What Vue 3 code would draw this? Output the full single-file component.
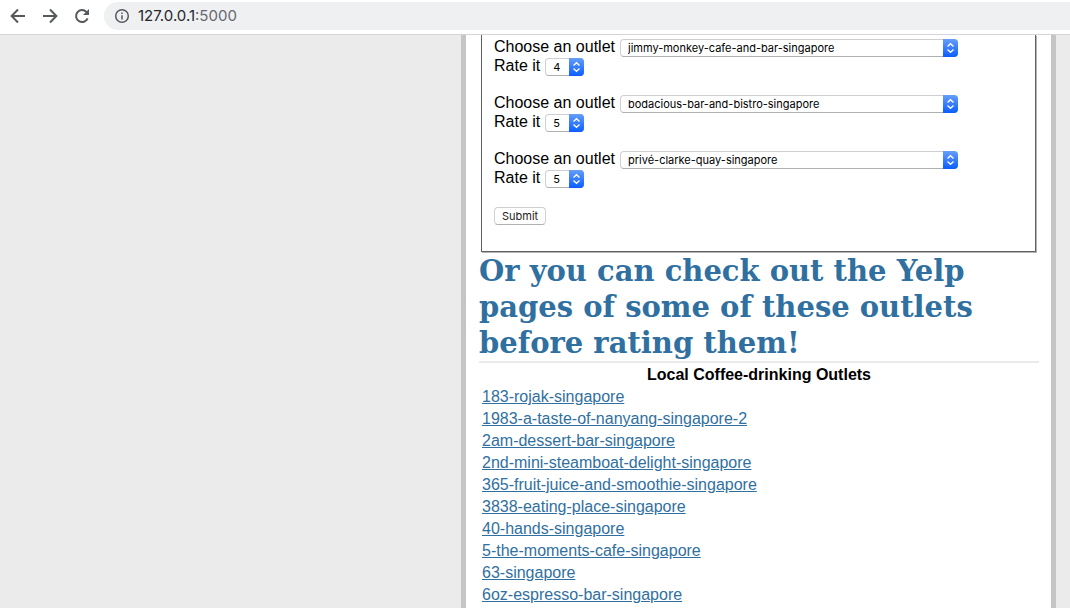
<script setup>
import { ref } from 'vue'

const ratings = ref([
  { outlet: 'jimmy-monkey-cafe-and-bar-singapore', score: 4 },
  { outlet: 'bodacious-bar-and-bistro-singapore', score: 5 },
  { outlet: 'privé-clarke-quay-singapore', score: 5 },
])
const choices = ratings.value.map((r) => r.outlet)

const outlets = [
  '183-rojak-singapore',
  '1983-a-taste-of-nanyang-singapore-2',
  '2am-dessert-bar-singapore',
  '2nd-mini-steamboat-delight-singapore',
  '365-fruit-juice-and-smoothie-singapore',
  '3838-eating-place-singapore',
  '40-hands-singapore',
  '5-the-moments-cafe-singapore',
  '63-singapore',
  '6oz-espresso-bar-singapore',
]
</script>

<template>
  <div class="browser">
    <header class="toolbar">
      <button class="nav" type="button" aria-label="Back">
        <svg viewBox="0 0 16 16"><path d="M15 8H2M8 1.5L1.6 8L8 14.5" /></svg>
      </button>
      <button class="nav" type="button" aria-label="Forward">
        <svg viewBox="0 0 16 16"><path d="M1 8H14M8 1.5L14.4 8L8 14.5" /></svg>
      </button>
      <button class="nav" type="button" aria-label="Reload">
        <svg viewBox="0 0 16 16">
          <path d="M13.6 10.3A6 6 0 1 1 12.4 3.9L13.4 5" />
          <path class="solid" d="M15 1V7H9Z" />
        </svg>
      </button>
      <div class="address">
        <svg class="info" viewBox="0 0 16 16">
          <circle cx="8" cy="8" r="6.3" />
          <path d="M8 7.2V11.6M8 4.4V6" />
        </svg>
        <span class="url">127.0.0.1<span class="port">:5000</span></span>
      </div>
    </header>

    <div class="viewport">
      <main class="page">
        <form class="panel" @submit.prevent>
          <div v-for="(r, i) in ratings" :key="i" class="group">
            <div class="line">
              <label :for="'outlet' + i">Choose an outlet</label>
              <span class="picker wide">
                <select :id="'outlet' + i" v-model="r.outlet">
                  <option v-for="c in choices" :key="c">{{ c }}</option>
                </select>
                <svg class="arrows" viewBox="0 0 15 18"><path d="M4.5 7.5L7.5 4.7L10.5 7.5M4.5 10.5L7.5 13.3L10.5 10.5" /></svg>
              </span>
            </div>
            <div class="line">
              <label :for="'score' + i">Rate it</label>
              <span class="picker small">
                <select :id="'score' + i" v-model="r.score">
                  <option v-for="n in 5" :key="n" :value="n">{{ n }}</option>
                </select>
                <svg class="arrows" viewBox="0 0 15 18"><path d="M4.5 7.5L7.5 4.7L10.5 7.5M4.5 10.5L7.5 13.3L10.5 10.5" /></svg>
              </span>
            </div>
          </div>
          <button class="submit" type="submit">Submit</button>
        </form>

        <h1>Or you can check out the Yelp pages of some of these outlets before rating them!</h1>

        <table>
          <thead>
            <tr><th>Local Coffee-drinking Outlets</th></tr>
          </thead>
          <tbody>
            <tr v-for="o in outlets" :key="o">
              <td><a href="#">{{ o }}</a></td>
            </tr>
          </tbody>
        </table>
      </main>
    </div>
  </div>
</template>

<style>
body {
  margin: 0;
  overflow: hidden;
}
</style>

<style scoped>
.browser {
  height: 100vh;
  display: flex;
  flex-direction: column;
  overflow: hidden;
  background: #ebebeb;
  font: 16px/18px "Liberation Sans", Arial, sans-serif;
  color: #000;
}
.toolbar {
  flex: none;
  display: flex;
  align-items: center;
  gap: 16px;
  box-sizing: border-box;
  height: 35px;
  padding: 0 0 3px 10px;
  background: #fff;
  border-bottom: 1px solid #d4d5d8;
}
.nav {
  width: 16px;
  height: 16px;
  padding: 0;
  border: 0;
  background: none;
}
.nav svg {
  display: block;
  width: 16px;
  height: 16px;
}
.nav path,
.info path,
.info circle {
  fill: none;
  stroke: #55585d;
  stroke-width: 2;
}
.nav .solid {
  fill: #55585d;
  stroke: none;
}
.address {
  flex: 1;
  display: flex;
  align-items: center;
  gap: 8px;
  height: 28px;
  margin-left: -2px;
  padding-left: 10px;
  background: #eff0f2;
  border-radius: 14px 0 0 14px;
}
.info {
  width: 16px;
  height: 16px;
}
.info path,
.info circle {
  stroke-width: 1.5;
}
.url {
  font-family: Inter, Roboto, sans-serif;
  font-size: 15px;
  color: #26282b;
}
.port {
  color: #66696e;
}
.viewport {
  flex: 1;
  min-height: 0;
  display: flex;
  justify-content: flex-end;
  padding-right: 14px;
  overflow: hidden;
}
.page {
  width: 560px;
  height: max-content;
  padding: 0 12px 13px 13px;
  border: solid #c5c5c5;
  border-width: 0 5px;
  background: #fff;
}
.panel {
  margin: 0 3px 0 2px;
  padding: 4px 12px 26px;
  border: solid #606060;
  border-width: 0 1px 1px;
  box-shadow: 1px 1px 0 #b4b4b4;
}
.group {
  margin-bottom: 18px;
}
.line {
  display: flex;
  align-items: flex-start;
  gap: 5px;
  height: 19px;
}
.line label {
  line-height: 16px;
}
.picker {
  position: relative;
  display: block;
  height: 18px;
}
.wide {
  width: 338px;
}
.small {
  width: 39px;
}
.picker select {
  appearance: none;
  display: block;
  box-sizing: border-box;
  width: 100%;
  height: 18px;
  margin: 0;
  padding: 0 16px 0 7px;
  border: 1px solid #cfcfcf;
  border-bottom-color: #b0b0b0;
  border-radius: 4px;
  background: #fff;
  font: 11px/16px Inter, sans-serif;
  color: #000;
}
.arrows {
  position: absolute;
  top: 0;
  right: 0;
  width: 15px;
  height: 18px;
  border-radius: 0 4px 4px 0;
  background: linear-gradient(#669ef8, #0a5eff);
  pointer-events: none;
}
.arrows path {
  fill: none;
  stroke: #fff;
  stroke-width: 1.3;
}
.submit {
  display: block;
  height: 18px;
  padding: 0 7px;
  border: 1px solid #cfcfcf;
  border-bottom-color: #b0b0b0;
  border-radius: 4px;
  background: #fff;
  font: 11px/16px Inter, sans-serif;
  color: #222;
}
h1 {
  margin: 1px 0 0;
  border-bottom: 2px solid #eaeaea;
  font: bold 29px/36px Georgia, "DejaVu Serif", serif;
  color: #3070a0;
}
table {
  width: 100%;
  border-spacing: 2px;
}
th,
td {
  padding: 1px;
}
td a {
  color: #3070a0;
}
</style>
